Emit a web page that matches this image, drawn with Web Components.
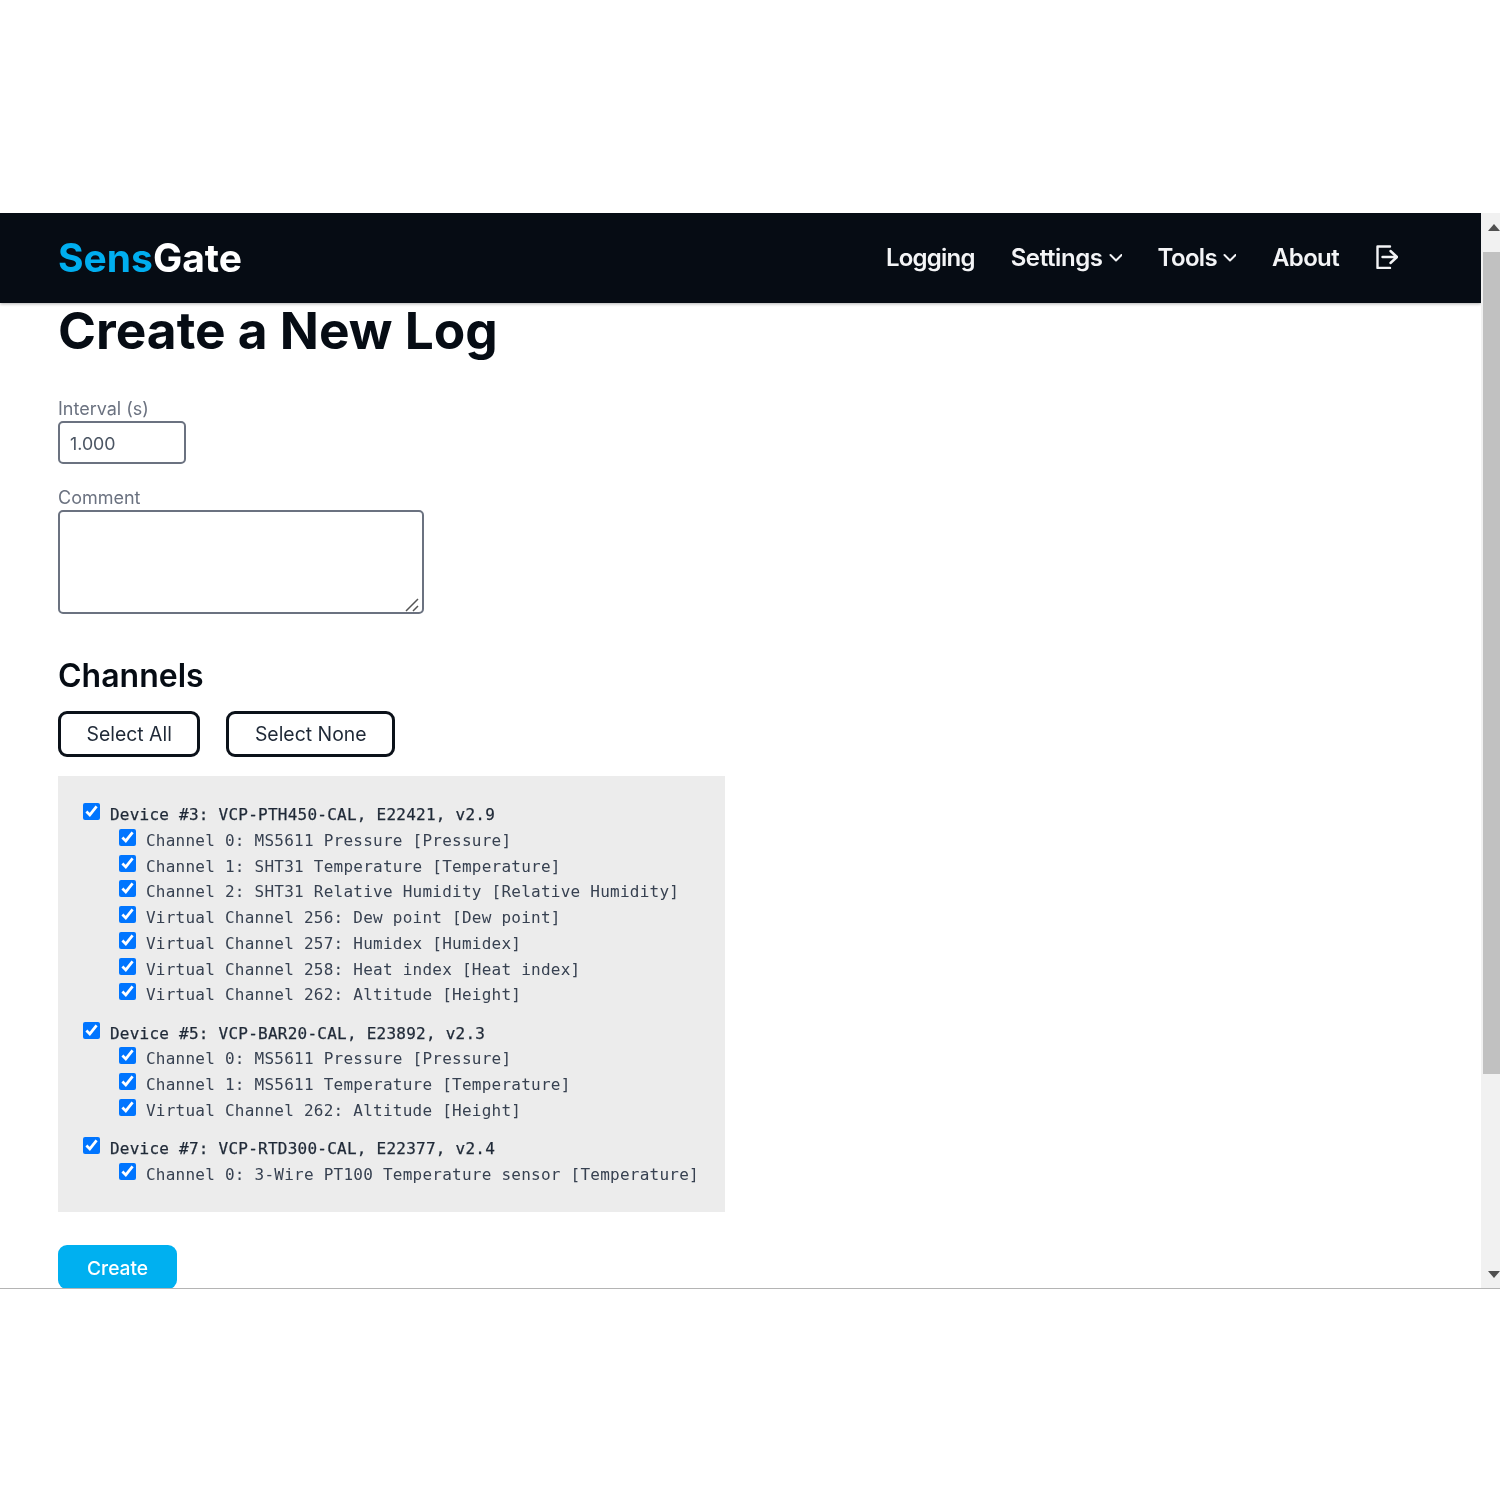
<!DOCTYPE html>
<html>
<head>
<meta charset="utf-8">
<title>SensGate</title>
<style>
  html, body { margin: 0; background: #fff; }
  body { font-family: Inter, "Liberation Sans", sans-serif; color: #060c14; height: 1500px; overflow: hidden; }
</style>
</head>
<body>
<app-window>
  <nav-bar></nav-bar>
  <log-form>
    <device-group label="Device #3: VCP-PTH450-CAL, E22421, v2.9">
      <channel-row>Channel 0: MS5611 Pressure [Pressure]</channel-row>
      <channel-row>Channel 1: SHT31 Temperature [Temperature]</channel-row>
      <channel-row>Channel 2: SHT31 Relative Humidity [Relative Humidity]</channel-row>
      <channel-row>Virtual Channel 256: Dew point [Dew point]</channel-row>
      <channel-row>Virtual Channel 257: Humidex [Humidex]</channel-row>
      <channel-row>Virtual Channel 258: Heat index [Heat index]</channel-row>
      <channel-row>Virtual Channel 262: Altitude [Height]</channel-row>
    </device-group>
    <device-group label="Device #5: VCP-BAR20-CAL, E23892, v2.3">
      <channel-row>Channel 0: MS5611 Pressure [Pressure]</channel-row>
      <channel-row>Channel 1: MS5611 Temperature [Temperature]</channel-row>
      <channel-row>Virtual Channel 262: Altitude [Height]</channel-row>
    </device-group>
    <device-group label="Device #7: VCP-RTD300-CAL, E22377, v2.4">
      <channel-row>Channel 0: 3-Wire PT100 Temperature sensor [Temperature]</channel-row>
    </device-group>
  </log-form>
</app-window>

<script>
class AppWindow extends HTMLElement {
  constructor() {
    super();
    this.attachShadow({ mode: "open" });
    this.shadowRoot.innerHTML = `
      <style>
        :host { display: flex; margin-top: 213px; height: 1075px; border-bottom: 1px solid #b4b4b4; box-sizing: content-box; filter: blur(.35px); }
        .page { flex: 1; min-width: 0; overflow: hidden; }
        .bar { width: 19px; flex: none; background: #f1f1f1; display: flex; flex-direction: column; }
        .arrow { height: 39px; display: flex; justify-content: flex-end; align-items: flex-start; flex: none; }
        .arrow.up { padding-top: 11px; box-sizing: border-box; }
        .arrow.down { margin-top: auto; height: 27px; }
        .thumb { height: 822px; margin-left: 2px; background: #c1c1c1; flex: none; }
        .tri { width: 0; height: 0; border-left: 6px solid transparent; border-right: 6px solid transparent; }
        .up .tri { border-bottom: 7px solid #505050; }
        .down .tri { border-top: 7px solid #505050; margin-top: 10px; }
      </style>
      <div class="page"><slot></slot></div>
      <div class="bar">
        <div class="arrow up"><div class="tri"></div></div>
        <div class="thumb"></div>
        <div class="arrow down"><div class="tri"></div></div>
      </div>
    `;
  }
}
customElements.define("app-window", AppWindow);

class NavBar extends HTMLElement {
  constructor() {
    super();
    this.attachShadow({ mode: "open" });
    const chevron = `<svg width="15" height="15" viewBox="0 0 15 15" fill="none" stroke="currentColor" stroke-width="2" stroke-linecap="round" stroke-linejoin="round"><path d="M3.5 5 9 10.5 14.5 5"/></svg>`;
    this.shadowRoot.innerHTML = `
      <style>
        :host { display: flex; align-items: center; height: 90px; background: #060c14; padding: 0 83px 0 58px; box-shadow: 0 1px 3px rgba(0,0,0,.3); position: relative; }
        .logo { font-size: 39px; font-weight: 700; color: #fff; margin-top: -2px; }
        .logo span { color: #00aeef; }
        .links { margin-left: auto; display: flex; align-items: center; gap: 36px; color: #f3f4f6; font-size: 24px; font-weight: 600; letter-spacing: -0.65px; margin-top: -2px; }
        .links div { display: flex; align-items: center; gap: 4px; }
        .links .logging { letter-spacing: -.8px; }
        .links .settings { letter-spacing: -.4px; }
        svg { display: block; }
      </style>
      <div class="logo"><span>Sens</span>Gate</div>
      <div class="links">
        <div class="logging">Logging</div>
        <div class="settings">Settings ${chevron}</div>
        <div>Tools ${chevron}</div>
        <div>About</div>
        <svg width="23" height="24" viewBox="0 0 23 24" fill="none" stroke="#f3f4f6" stroke-width="2.4" stroke-linecap="round" stroke-linejoin="round"><path d="M15 1.5H2.5V23H15M7.5 12H22M15.5 6l6.5 6-6.5 6"/></svg>
      </div>
    `;
  }
}
customElements.define("nav-bar", NavBar);

class FormField extends HTMLElement {
  constructor() {
    super();
    this.attachShadow({ mode: "open" });
    const label = this.getAttribute("label");
    this.shadowRoot.innerHTML = `
      <style>
        :host { display: block; position: relative; }
        label { display: block; font-size: 18px; line-height: 24px; color: #6b7280; }
      </style>
      <label>${label}</label>
      <slot></slot>
    `;
  }
}
customElements.define("form-field", FormField);

class OutlineButton extends HTMLElement {
  constructor() {
    super();
    this.attachShadow({ mode: "open" });
    this.shadowRoot.innerHTML = `
      <style>
        :host { display: inline-flex; align-items: center; height: 46px; box-sizing: border-box; padding: 0 25.5px; border: 3px solid #0b1119; border-radius: 9px; font-size: 19.4px; color: #1f2937; background: #fff; }
      </style>
      <slot></slot>
    `;
  }
}
customElements.define("outline-button", OutlineButton);

class PrimaryButton extends HTMLElement {
  constructor() {
    super();
    this.attachShadow({ mode: "open" });
    this.shadowRoot.innerHTML = `
      <style>
        :host { display: inline-flex; align-items: center; height: 44px; box-sizing: border-box; padding: 2px 29px 0; border-radius: 9px; font-size: 19.2px; font-weight: 500; color: #fff; background: #00b0f0; }
      </style>
      <slot></slot>
    `;
  }
}
customElements.define("primary-button", PrimaryButton);

class LogForm extends HTMLElement {
  constructor() {
    super();
    this.attachShadow({ mode: "open" });
    this.shadowRoot.innerHTML = `
      <style>
        :host { display: block; padding: 0 0 0 58px; font-family: Inter, "Liberation Sans", sans-serif; }
        h1 { margin: -1px 0 0; font-size: 51.4px; line-height: 56px; font-weight: 700; color: #060c14; }
        h2 { margin: 42px 0 0; font-size: 32px; line-height: 40px; font-weight: 600; color: #060c14; }
        form-field.interval { margin-top: 39px; }
        form-field.comment { margin-top: 22px; }
        input, textarea { display: block; box-sizing: border-box; border: 2px solid #6b7280; border-radius: 5px; background: #fff; font: 400 17.8px Inter, sans-serif; color: #4b5563; outline: none; margin: 0; }
        input { width: 128px; height: 43px; padding: 1px 10px 0; }
        textarea { width: 366px; height: 104px; padding: 8px 10px; resize: none; }
        .grip { position: absolute; left: 347px; bottom: 2px; display: block; }
        .buttons { display: flex; gap: 26px; margin-top: 15px; }
        .panel { width: 667px; height: 436px; box-sizing: border-box; margin-top: 19px; padding: 26px 26px 0; background: #ececec; display: flex; flex-direction: column; gap: 12.6px; }
        .submit { margin-top: 33px; }
      </style>
      <h1>Create a New Log</h1>
      <form-field class="interval" label="Interval (s)"><input type="text" value="1.000"></form-field>
      <form-field class="comment" label="Comment">
        <textarea></textarea>
        <svg class="grip" width="14" height="14" viewBox="0 0 14 14" fill="none" stroke="#555" stroke-width="1.5"><path d="M13 1 1 13M13 8l-5 5"/></svg>
      </form-field>
      <h2>Channels</h2>
      <div class="buttons">
        <outline-button>Select All</outline-button>
        <outline-button>Select None</outline-button>
      </div>
      <div class="panel"><slot></slot></div>
      <div class="submit"><primary-button>Create</primary-button></div>
    `;
  }
}
customElements.define("log-form", LogForm);

class ChannelRow extends HTMLElement {
  constructor() {
    super();
    this.attachShadow({ mode: "open" });
    this.shadowRoot.innerHTML = `
      <style>
        :host { display: flex; align-items: flex-start; height: 25.75px; font: 400 16px/25.75px "DejaVu Sans Mono", monospace; letter-spacing: .24px; color: #374151; white-space: pre; }
        :host([device]) { color: #1f2937; -webkit-text-stroke: .25px #1f2937; }
        input { width: 17px; height: 17px; margin: 1px 10px 0 -1px; accent-color: #0075ff; flex: none; }
      </style>
      <input type="checkbox" checked><slot></slot>
    `;
  }
}
customElements.define("channel-row", ChannelRow);

class DeviceGroup extends HTMLElement {
  constructor() {
    super();
    this.attachShadow({ mode: "open" });
    this.shadowRoot.innerHTML = `
      <style>
        :host { display: block; }
        .kids { padding-left: 36px; }
      </style>
      <channel-row device>${this.getAttribute("label")}</channel-row>
      <div class="kids"><slot></slot></div>
    `;
  }
}
customElements.define("device-group", DeviceGroup);
</script>
</body>
</html>
